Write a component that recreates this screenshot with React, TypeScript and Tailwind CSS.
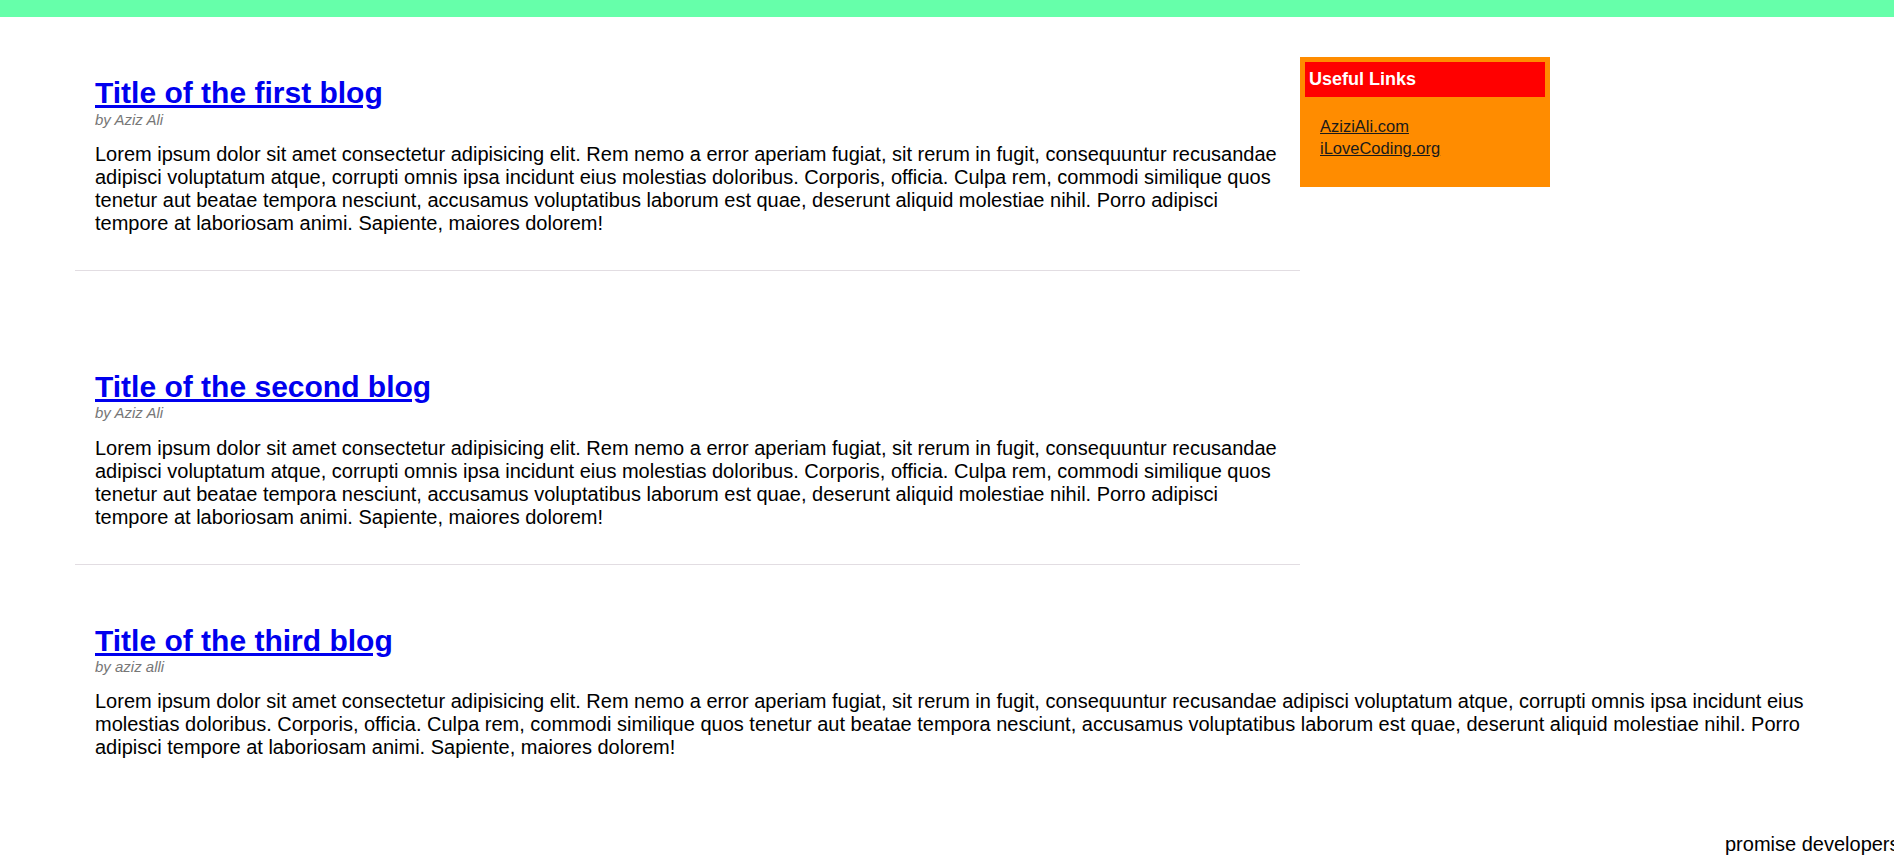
const LOREM =
  "Lorem ipsum dolor sit amet consectetur adipisicing elit. Rem nemo a error aperiam fugiat, sit rerum in fugit, consequuntur recusandae adipisci voluptatum atque, corrupti omnis ipsa incidunt eius molestias doloribus. Corporis, officia. Culpa rem, commodi similique quos tenetur aut beatae tempora nesciunt, accusamus voluptatibus laborum est quae, deserunt aliquid molestiae nihil. Porro adipisci tempore at laboriosam animi. Sapiente, maiores dolorem!";

type PostProps = {
  title: string;
  author: string;
};

const PostBody = ({ title, author }: PostProps) => {
  return (
    <>
      <h2 className="text-[30px] leading-[1.15] font-bold">
        <a href="#" className="text-[#0000ee] underline">
          {title}
        </a>
      </h2>
      <p className="text-[15px] leading-[1.15] italic text-[#777777]">
        {author}
      </p>
      <p className="mt-[15px] text-[20px] leading-[23px] text-black">{LOREM}</p>
    </>
  );
};

const Sidebar = () => {
  return (
    <aside className="mt-[40px] w-[250px] shrink-0 self-start bg-[#ff8c00] p-[5px] pb-[28px]">
      <h4 className="h-[35px] bg-[#ff0000] pl-[4px] flex items-center text-[18px] font-bold text-white">
        Useful Links
      </h4>
      <ul className="mt-[18px] pl-[15px] text-[16.5px] leading-[22px]">
        <li>
          <a href="#" className="text-[#1a1a1a] underline">
            AziziAli.com
          </a>
        </li>
        <li>
          <a href="#" className="text-[#1a1a1a] underline">
            iLoveCoding.org
          </a>
        </li>
      </ul>
    </aside>
  );
};

export default function App() {
  return (
    <div className="w-full min-h-screen overflow-hidden bg-white font-['Liberation_Sans',Arial,sans-serif]">
      <div className="h-[17px] bg-[#66ffaa]" />

      <div className="pl-[75px] pr-[62px]">
        <div className="flex flex-row items-start">
          <div className="w-[1225px] shrink-0">
            <article className="pt-[59px] pb-[35px] px-[20px] border-b border-[#e2dde2]">
              <PostBody title="Title of the first blog" author="by Aziz Ali" />
            </article>
            <article className="pt-[99px] pb-[35px] px-[20px] border-b border-[#e2dde2]">
              <PostBody title="Title of the second blog" author="by Aziz Ali" />
            </article>
          </div>
          <Sidebar />
        </div>

        <article className="pt-[59px] px-[20px]">
          <PostBody title="Title of the third blog" author="by aziz alli" />
        </article>
      </div>

      <footer className="mt-[74px] pl-[1725px] whitespace-nowrap text-[20px] leading-[23px] text-black">
        promise developers
      </footer>
    </div>
  );
}
